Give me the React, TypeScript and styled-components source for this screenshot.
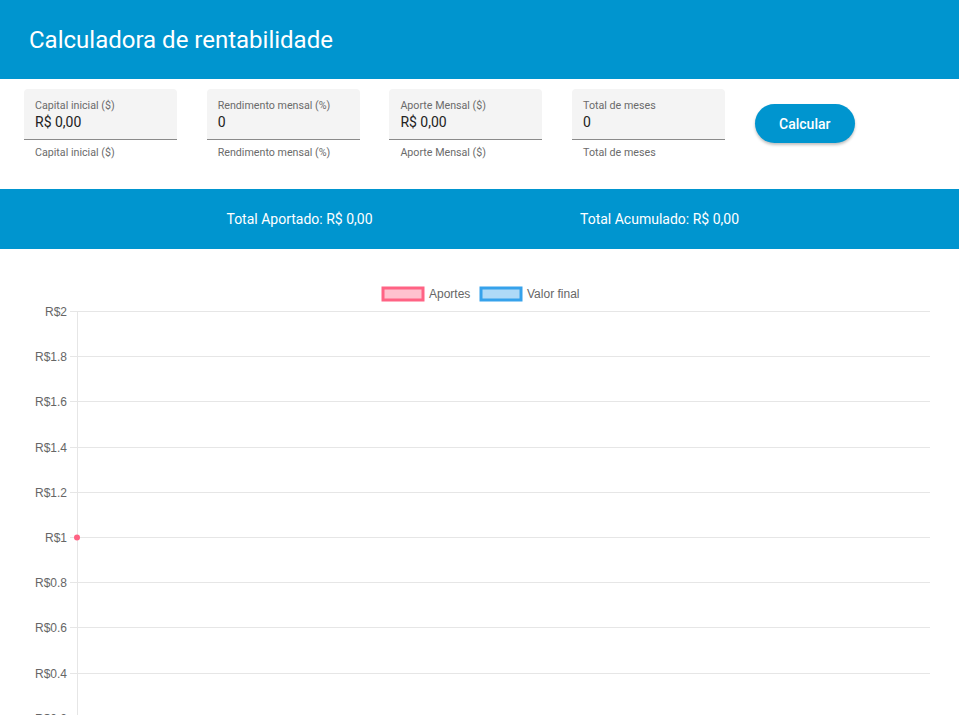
import React from "react";
import styled, { createGlobalStyle } from "styled-components";

const GlobalStyle = createGlobalStyle`
  html, body { margin: 0; padding: 0; background: #fff; }
  body { font-family: Roboto, "Liberation Sans", Arial, sans-serif; overflow: hidden; }
  * { box-sizing: border-box; }
`;

const BLUE = "#0095cf";

const Header = styled.header`
  height: 79px;
  background: ${BLUE};
  display: flex;
  align-items: center;
  padding-left: 29px;
`;

const Title = styled.h1`
  margin: 0;
  color: #fff;
  font-size: 24px;
  font-weight: 400;
  line-height: 1;
`;

const FormRow = styled.section`
  height: 110px;
  display: flex;
  align-items: flex-start;
  gap: 29.7px;
  padding: 10px 0 0 24px;
`;

const Field = styled.div`
  width: 153px;
  display: flex;
  flex-direction: column;
`;

const FieldBox = styled.div`
  height: 51px;
  background: #f4f4f4;
  border-radius: 4px 4px 0 0;
  border-bottom: 1px solid #8a8a8a;
  padding: 10px 11px 0;
  display: flex;
  flex-direction: column;
`;

const FieldLabel = styled.span`
  font-size: 10.7px;
  color: #6b6b6b;
  line-height: 13px;
`;

const FieldValue = styled.span`
  font-size: 14px;
  color: #222;
  line-height: 20px;
`;

const Helper = styled.span`
  font-size: 10.7px;
  color: #6b6b6b;
  line-height: 13px;
  padding: 6px 11px 0;
`;

const Button = styled.button`
  margin-top: 15px;
  width: 100px;
  height: 39px;
  border: none;
  border-radius: 20px;
  background: ${BLUE};
  color: #fff;
  font-family: Roboto, "Liberation Sans", Arial, sans-serif;
  font-size: 14px;
  font-weight: 500;
  box-shadow: 0 2px 3px rgba(0, 0, 0, 0.25);
  cursor: pointer;
`;

const Band = styled.section`
  height: 60px;
  background: ${BLUE};
  display: flex;
  justify-content: center;
`;

const BandInner = styled.div`
  width: 720px;
  display: grid;
  grid-template-columns: 1fr 1fr;
  align-items: center;
`;

const Total = styled.span`
  text-align: center;
  color: #fff;
  font-size: 14px;
  font-weight: 400;
`;

const ChartWrap = styled.section`
  display: block;
`;

const fields = [
  { label: "Capital inicial ($)", value: "R$ 0,00" },
  { label: "Rendimento mensal (%)", value: "0" },
  { label: "Aporte Mensal ($)", value: "R$ 0,00" },
  { label: "Total de meses", value: "0" },
];

const Chart: React.FC = () => {
  const top = 311 - 249; // first gridline in svg coords
  const step = 45.2;
  const labels = ["R$2", "R$1.8", "R$1.6", "R$1.4", "R$1.2", "R$1", "R$0.8", "R$0.6", "R$0.4", "R$0.2"];
  return (
    <svg width="959" height="470" viewBox="0 0 959 470" style={{ display: "block" }}>
      <rect x="383" y={39} width="40" height="12" fill="rgba(255,99,132,0.4)" stroke="#ff6384" strokeWidth="3" />
      <text x="429" y={49} fontFamily="'Liberation Sans', Arial, sans-serif" fontSize="12" fill="#666">Aportes</text>
      <rect x="481" y={39} width="40" height="12" fill="rgba(54,162,235,0.4)" stroke="#36a2eb" strokeWidth="3" />
      <text x="527" y={49} fontFamily="'Liberation Sans', Arial, sans-serif" fontSize="12" fill="#666">Valor final</text>
      <line x1="77.5" y1={top} x2="77.5" y2="470" stroke="#e6e6e6" strokeWidth="1" />
      {labels.map((l, i) => {
        const y = Math.round(top + i * step) + 0.5;
        return (
          <g key={l}>
            <line x1="70" y1={y} x2="930" y2={y} stroke="#e6e6e6" strokeWidth="1" />
            <text
              x="67"
              y={y + 4}
              textAnchor="end"
              fontFamily="'Liberation Sans', Arial, sans-serif"
              fontSize="12"
              fill="#666"
            >
              {l}
            </text>
          </g>
        );
      })}
      <circle cx="77" cy={Math.round(top + 5 * step) + 0.5} r="3" fill="#ff6384" />
    </svg>
  );
};

export default function App() {
  return (
    <>
      <GlobalStyle />
      <Header>
        <Title>Calculadora de rentabilidade</Title>
      </Header>
      <FormRow>
        {fields.map((f) => (
          <Field key={f.label}>
            <FieldBox>
              <FieldLabel>{f.label}</FieldLabel>
              <FieldValue>{f.value}</FieldValue>
            </FieldBox>
            <Helper>{f.label}</Helper>
          </Field>
        ))}
        <Button>Calcular</Button>
      </FormRow>
      <Band>
        <BandInner>
          <Total>Total Aportado: R$ 0,00</Total>
          <Total>Total Acumulado: R$ 0,00</Total>
        </BandInner>
      </Band>
      <ChartWrap>
        <Chart />
      </ChartWrap>
    </>
  );
}
